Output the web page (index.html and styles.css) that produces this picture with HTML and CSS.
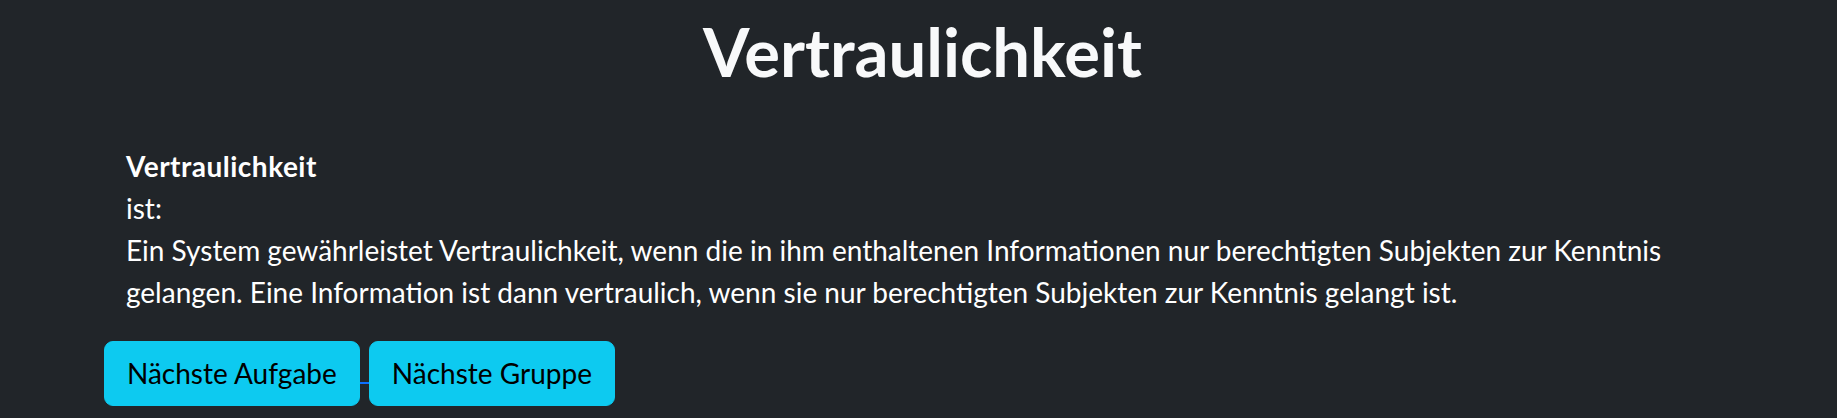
FILE: index.html
```html
<!DOCTYPE html>
<html lang="de">
<head>
<meta charset="utf-8">
<title>Vertraulichkeit</title>
<link rel="stylesheet" href="styles.css">
</head>
<body>
<main class="page">
  <h1 class="title">Vertraulichkeit</h1>
  <section class="card">
    <p class="definition">
      <strong class="term">Vertraulichkeit</strong><br>
      ist:<br>
      Ein System gewährleistet Vertraulichkeit, wenn die in ihm enthaltenen Informationen nur berechtigten Subjekten zur Kenntnis gelangen. Eine Information ist dann vertraulich, wenn sie nur berechtigten Subjekten zur Kenntnis gelangt ist.
    </p>
    <div class="actions">
      <a class="btn" href="#">Nächste Aufgabe</a><span class="link-gap"></span><a class="btn" href="#">Nächste Gruppe</a>
    </div>
  </section>
</main>
</body>
</html>
```
FILE: styles.css
```css
html, body {
  margin: 0;
  padding: 0;
  background: #212529;
  color: #f8f9fa;
  font-family: "Lato", "Open Sans", sans-serif;
}

.page {
  padding: 11px 118px 0 104px;
  height: 418px;
  box-sizing: border-box;
  overflow: hidden;
}

.title {
  margin: 0;
  font-size: 67px;
  line-height: 1.2;
  font-weight: 700;
  text-align: center;
  padding-left: 22px;
}

.card {
  margin-top: 54px;
}

.definition {
  margin: 0;
  padding-left: 22px;
  font-size: 28px;
  line-height: 42px;
  color: #fff;
}

.term {
  font-weight: 700;
  letter-spacing: 0.5px;
}

.actions {
  margin-top: 28px;
  display: flex;
  align-items: flex-start;
}

.btn {
  display: inline-block;
  background: #0dcaf0;
  color: #000;
  text-decoration: none;
  font-size: 28px;
  line-height: 42px;
  padding: 10px 22px 11px;
  border: 1px solid #0dcaf0;
  border-radius: 9px;
}

.link-gap {
  width: 9px;
  height: 2px;
  background: #0d6efd;
  margin-top: 41px;
}
```
